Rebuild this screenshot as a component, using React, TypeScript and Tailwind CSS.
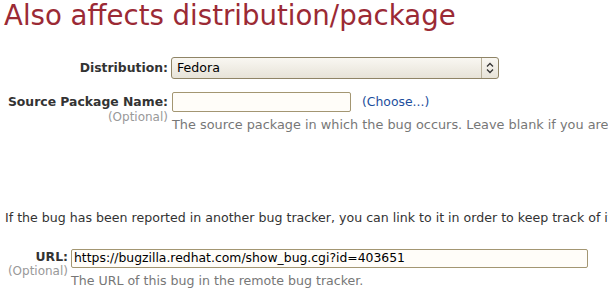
export default function App() {
  return (
    <div className="w-[608px] h-[293px] overflow-hidden bg-white font-['DejaVu_Sans',sans-serif] text-[12px] text-[#333]">
      <h1 className="pl-[4px] pt-[1px] text-[27.6px] leading-[30px] font-normal text-[#9b2a35] whitespace-nowrap">
        Also affects distribution/package
      </h1>

      <div className="mt-[26px] flex items-center">
        <label className="w-[168px] shrink-0 text-right font-bold text-[12.4px] text-[#333]">Distribution:</label>
        <div className="ml-[3px] w-[328px] h-[22px] rounded-[3px] border border-[#8f8466] bg-gradient-to-b from-[#f9f7f2] to-[#e7e3d8] flex items-center">
          <span className="flex-1 pl-[5px] text-[12.6px] text-black">Fedora</span>
          <span className="w-[17px] h-full border-l border-[#b8b09a] flex items-center justify-center">
            <svg width="8" height="12" viewBox="0 0 8 12" fill="none" stroke="#333" strokeWidth="1.3">
              <path d="M1 4.5 L4 1.5 L7 4.5" />
              <path d="M1 7.5 L4 10.5 L7 7.5" />
            </svg>
          </span>
        </div>
      </div>

      <div className="mt-[13px] flex items-start">
        <div className="w-[168px] shrink-0 text-right">
          <div className="font-bold text-[12.4px] leading-[18px] mt-[1px]">Source Package Name:</div>
          <div className="text-[#999] leading-[12px]">(Optional)</div>
        </div>
        <div className="ml-[4px]">
          <div className="flex items-center">
            <div className="w-[179px] h-[20px] rounded-[2px] border border-[#a39672] bg-[#fffdf9]" />
            <a className="ml-[11px] text-[#1c4e9c] text-[12.4px]">(Choose...)</a>
          </div>
          <div className="mt-[6px] text-[#777] text-[12.85px] whitespace-nowrap leading-[14px]">
            The source package in which the bug occurs. Leave blank if you are not sure.
          </div>
        </div>
      </div>

      <p className="mt-[79px] pl-[5px] whitespace-nowrap text-[12.6px] leading-[14px] text-[#333]">
        If the bug has been reported in another bug tracker, you can link to it in order to keep track of its status.
      </p>

      <div className="mt-[24px] flex items-start">
        <div className="w-[68px] shrink-0 text-right">
          <div className="font-bold text-[12.4px] leading-[16px]">URL:</div>
          <div className="text-[#999] leading-[13px]">(Optional)</div>
        </div>
        <div className="ml-[3px]">
          <div className="w-[517px] h-[19px] rounded-[2px] border border-[#a39672] bg-[#fffdf9] flex items-center pl-[2px] text-[12.4px] text-black">
            https://bugzilla.redhat.com/show_bug.cgi?id=403651
          </div>
          <div className="mt-[6px] text-[#777] text-[12.6px] leading-[14px]">The URL of this bug in the remote bug tracker.</div>
        </div>
      </div>
    </div>
  )
}
